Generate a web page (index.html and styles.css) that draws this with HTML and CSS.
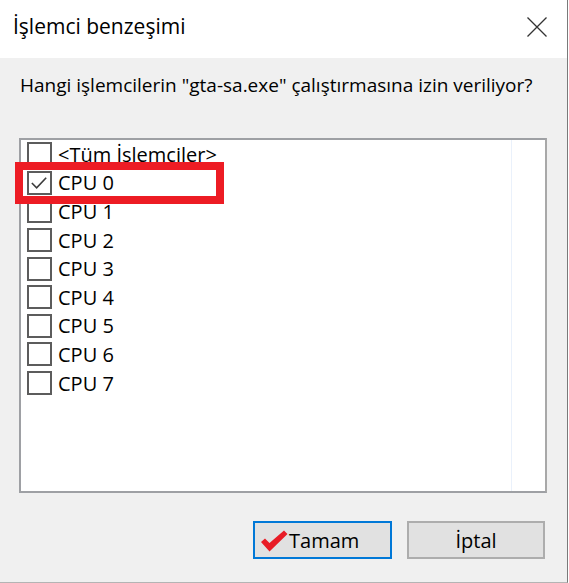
FILE: index.html
```html
<!DOCTYPE html>
<html lang="tr">
<head>
<meta charset="utf-8">
<title>İşlemci benzeşimi</title>
<link rel="stylesheet" href="styles.css">
</head>
<body>
<div class="window">
  <div class="titlebar">
    <span class="title">İşlemci benzeşimi</span>
    <svg class="close" viewBox="0 0 20 20" width="20" height="20"><path d="M0.5 0.5 L19.5 19.5 M19.5 0.5 L0.5 19.5" stroke="#333" stroke-width="1.3" fill="none"/></svg>
  </div>
  <div class="body">
    <p class="prompt">Hangi işlemcilerin "gta-sa.exe" çalıştırmasına izin veriliyor?</p>
    <div class="listbox">
      <div class="divider"></div>
      <ul class="items">
        <li class="item"><span class="box"></span><span class="label">&lt;Tüm İslemciler&gt;</span></li>
        <li class="item"><span class="box"><svg viewBox="0 0 22 20" width="22" height="20"><polyline points="3,10 8,15 18,4.5" fill="none" stroke="#3c3c3c" stroke-width="1.7"/></svg></span><span class="label">CPU 0</span></li>
        <li class="item"><span class="box"></span><span class="label">CPU 1</span></li>
        <li class="item"><span class="box"></span><span class="label">CPU 2</span></li>
        <li class="item"><span class="box"></span><span class="label">CPU 3</span></li>
        <li class="item"><span class="box"></span><span class="label">CPU 4</span></li>
        <li class="item"><span class="box"></span><span class="label">CPU 5</span></li>
        <li class="item"><span class="box"></span><span class="label">CPU 6</span></li>
        <li class="item"><span class="box"></span><span class="label">CPU 7</span></li>
      </ul>
      <div class="highlight"></div>
    </div>
    <div class="buttons">
      <button class="btn btn-default"><svg class="okmark" viewBox="0 0 28 22" width="28" height="22"><path d="M1 12 L5 8.5 L9.5 13 L24 0.5 L27.5 4 L9.5 21.5 Z" fill="#e81c26"/></svg><span>Tamam</span></button>
      <button class="btn">İptal</button>
    </div>
  </div>
</div>
</body>
</html>
```

FILE: styles.css
```css
* { box-sizing: border-box; }
html, body { margin: 0; padding: 0; background: #ffffff; }
body {
  font-family: "Open Sans", "Noto Sans", sans-serif;
  color: #000;
}
.window {
  width: 568px;
  height: 583px;
  border-right: 1px solid #7a7a7a;
  border-bottom: 1px solid #b4b4b4;
  background: #f0f0f0;
  display: flex;
  flex-direction: column;
}
.titlebar {
  height: 58px;
  background: #ffffff;
  display: flex;
  align-items: center;
  justify-content: space-between;
  padding: 0 20px 6px 13px;
}
.title {
  font-size: 21px;
  color: #000;
}
.close { display: block; margin-top: 2px; }
.body {
  flex: 1;
  padding: 0 20px 0 19px;
  display: flex;
  flex-direction: column;
}
.prompt {
  margin: 15px 0 0 1px;
  font-size: 19px;
  line-height: 24px;
  color: #000;
  white-space: nowrap;
}
.listbox {
  position: relative;
  margin-top: 41px;
  width: 528px;
  height: 355px;
  background: #fff;
  border: 2px solid #9ea0a4;
  border-right-color: #a8a8a8;
}
.divider {
  position: absolute;
  left: 490px;
  top: 0;
  bottom: 0;
  width: 1px;
  background: #eaf1fb;
}
.items {
  list-style: none;
  margin: 0;
  padding: 0 0 0 6px;
}
.item {
  height: 28.6px;
  display: flex;
  align-items: center;
  font-size: 20px;
}
.box {
  width: 25px;
  height: 24px;
  border: 2px solid #5c5c5c;
  background: #fff;
  margin-right: 6px;
  display: flex;
  align-items: center;
  justify-content: center;
  flex: none;
}
.box svg { display: block; }
.label { color: #000; }
.highlight {
  position: absolute;
  left: -6px;
  top: 22px;
  width: 209px;
  height: 42px;
  border: 8px solid #ed1c24;
}
.buttons {
  margin-top: 28px;
  display: flex;
  justify-content: flex-end;
  gap: 15px;
  padding-right: 2px;
}
.btn {
  width: 138px;
  height: 38px;
  background: #e1e1e1;
  border: 2px solid #adadad;
  font-family: inherit;
  font-size: 20px;
  color: #000;
  padding: 0;
  display: flex;
  align-items: center;
  justify-content: center;
}
.btn-default {
  width: 139px;
  border-color: #0078d7;
  justify-content: flex-start;
  padding-left: 5px;
}
.okmark { display: block; margin-right: 1px; margin-top: 2px; }
```
